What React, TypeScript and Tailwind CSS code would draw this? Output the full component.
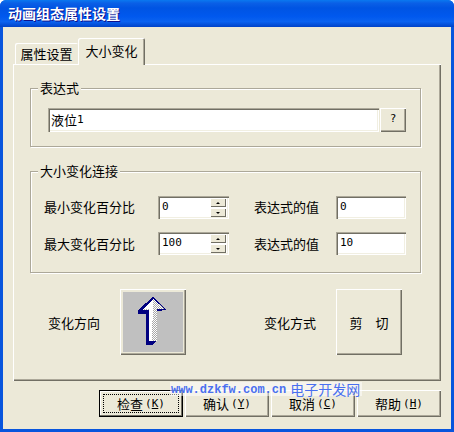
const font = { fontFamily: '"Noto Sans CJK SC","Liberation Sans",sans-serif' };

const raised = "shadow-[inset_1px_1px_0_#ffffff,inset_-1px_-1px_0_#716f64,inset_-2px_-2px_0_#aca899]";
const sunken = "shadow-[inset_1px_1px_0_#aca899,inset_2px_2px_0_#716f64,inset_-1px_-1px_0_#ffffff,inset_-2px_-2px_0_#f1efe2]";
const group = "relative border border-[#aca899] shadow-[inset_1px_1px_0_#ffffff,1px_1px_0_#ffffff]";
const mono = "font-['DejaVu_Sans_Mono'] text-[11px]";

function Legend({ children }: { children: string }) {
  return <span className="absolute left-[7px] top-[-10px] bg-[#ece9d8] px-[2px] text-[13px] leading-[18px]">{children}</span>;
}

function Field({ value, width }: { value: string; width: string }) {
  return (
    <div className={`flex h-[23px] items-center bg-white pb-[3px] pl-[4px] ${sunken} ${width}`}>
      <span className={`${mono} leading-none`}>{value}</span>
    </div>
  );
}

function Spin({ value }: { value: string }) {
  const part = "flex h-[9px] w-[16px] items-center justify-center bg-[#ece9d8] text-[0px] shadow-[inset_1px_1px_0_#ffffff,inset_-1px_-1px_0_#716f64]";
  return (
    <div className={`flex h-[23px] w-[71px] items-center justify-between bg-white pb-[2px] pl-[4px] pr-[3px] ${sunken}`}>
      <span className={`${mono} mb-[1px] leading-none`}>{value}</span>
      <div className="mt-[2px] flex flex-col gap-[1px]">
        <div className={part}>
          <span className="h-0 w-0 border-x-[2px] border-b-[2px] border-x-transparent border-b-black" />
        </div>
        <div className={part}>
          <span className="h-0 w-0 border-x-[2px] border-t-[2px] border-x-transparent border-t-black" />
        </div>
      </div>
    </div>
  );
}

function Action({ label, k, focus }: { label: string; k: string; focus?: boolean }) {
  return (
    <button
      className={`relative flex h-[27px] w-[84px] items-center justify-center pb-[1px] pt-[1px] text-[13px] leading-none ${
        focus ? "border border-black shadow-[inset_-1px_-1px_0_#716f64,inset_1px_1px_0_#ffffff]" : raised
      }`}
    >
      {focus && <span className="absolute inset-[3px] border border-dotted border-black" />}
      <span>{label}</span>
      <span className={`${mono} ml-[2px]`}>
        (<span className="underline">{k}</span>)
      </span>
    </button>
  );
}

function Arrow() {
  return (
    <svg width="60" height="60" viewBox="3 3 60 60" shapeRendering="crispEdges">
      <defs>
        <pattern id="dith" width="2" height="2" patternUnits="userSpaceOnUse">
          <rect width="2" height="2" fill="#ffffff" />
          <rect width="1" height="1" fill="#a8a8a8" />
          <rect x="1" y="1" width="1" height="1" fill="#a8a8a8" />
        </pattern>
      </defs>
      <polygon points="33,8 46,20 46,21 37,22 37,52 32,56 26,56 26,25 18,25 18,21" fill="#000080" />
      <polygon points="33,10 45,20 37,20 37,52 29,52 29,21 23,21" fill="url(#dith)" />
      <polygon points="33,10 29,14 25,20 29,20 29,52 32,52" fill="#ffffff" />
    </svg>
  );
}

export default function App() {
  return (
    <div className="relative flex h-[432px] w-[454px] flex-col overflow-hidden rounded-t-[6px] bg-[#0855dd] text-black" style={font}>
      <div className="flex h-[27px] items-center bg-[linear-gradient(180deg,#0a78f0_0%,#0a5fe6_12%,#0054e3_30%,#0058ee_60%,#0a62f0_80%,#0042c8_100%)] pb-[1px] pl-[8px]">
        <span className="text-[14px] font-bold leading-none text-white [text-shadow:1px_1px_0_#0f1089]">动画组态属性设置</span>
      </div>

      <div className="mx-[3px] mb-[3px] flex flex-1 flex-col bg-[#ece9d8] pl-[10px]">
        <div className="ml-[2px] mt-[11px] flex h-[26px] items-end">
          <div className="mb-[-1px] flex h-[22px] w-[63px] items-center justify-center rounded-t-[2px] pb-[1px] text-[13px] shadow-[inset_1px_1px_0_#ffffff]">
            属性设置
          </div>
          <div className="relative z-10 mb-[-1px] flex h-[27px] w-[67px] items-center justify-center rounded-t-[2px] bg-[#ece9d8] pb-[2px] text-[13px] shadow-[inset_1px_1px_0_#ffffff,inset_-1px_0_0_#716f64,inset_-2px_0_0_#aca899]">
            大小变化
          </div>
        </div>

        <div className="h-[317px] w-[428px] px-[17px] pt-[24px] shadow-[inset_1px_1px_0_#ffffff,inset_-1px_-1px_0_#716f64,inset_-2px_-2px_0_#aca899]">
          <div className={`${group} h-[59px] w-[391px] pl-[17px] pt-[19px]`}>
            <Legend>表达式</Legend>
            <div className="flex items-start gap-[1px]">
              <div className={`flex h-[24px] w-[331px] items-center bg-white pb-[2px] pl-[3px] text-[13px] leading-none ${sunken}`}>
                液位<span className={mono}>1</span>
              </div>
              <button className={`flex h-[24px] w-[26px] items-center justify-center pb-[1px] ${mono} ${raised}`}>?</button>
            </div>
          </div>

          <div className={`${group} mt-[24px] h-[102px] w-[391px] pl-[13px] pt-[24px]`}>
            <Legend>大小变化连接</Legend>
            <div className="flex flex-col gap-[13px]">
              <div className="flex items-center">
                <span className="w-[114px] pb-[2px] text-[13px] leading-none">最小变化百分比</span>
                <Spin value="0" />
                <span className="ml-[25px] w-[82px] pb-[2px] text-[13px] leading-none">表达式的值</span>
                <Field value="0" width="w-[70px]" />
              </div>
              <div className="flex items-center">
                <span className="w-[114px] pb-[1px] text-[13px] leading-none">最大变化百分比</span>
                <Spin value="100" />
                <span className="ml-[25px] w-[82px] pb-[1px] text-[13px] leading-none">表达式的值</span>
                <Field value="10" width="w-[70px]" />
              </div>
            </div>
          </div>

          <div className="mt-[16px] flex items-center pl-[18px]">
            <span className="w-[72px] text-[13px] leading-none">变化方向</span>
            <div className={`flex h-[66px] w-[66px] items-center justify-center bg-[#ece9d8] ${raised}`}>
              <div className="h-[60px] w-[60px] bg-[#c0c0c0]">
                <Arrow />
              </div>
            </div>
            <span className="ml-[78px] w-[72px] text-[13px] leading-none">变化方式</span>
            <div className={`flex h-[66px] w-[66px] items-center justify-center gap-[13px] text-[13px] leading-none ${raised}`}>
              <span>剪</span>
              <span>切</span>
            </div>
          </div>
        </div>

        <div className="ml-[86px] mt-[9px] flex gap-[2px]">
          <Action label="检查" k="K" focus />
          <Action label="确认" k="Y" />
          <Action label="取消" k="C" />
          <Action label="帮助" k="H" />
        </div>
      </div>

      <div className="absolute left-[170px] top-[382px] flex h-[14px] items-center gap-[4px] bg-white/50 pl-[1px] pr-[2px] text-[#4a70f0]">
        <span className="mt-[2px] font-['Liberation_Mono'] text-[12px] font-bold leading-none">www.dzkfw.com.cn</span>
        <span className="text-[14px] leading-none">电子开发网</span>
      </div>
    </div>
  );
}
